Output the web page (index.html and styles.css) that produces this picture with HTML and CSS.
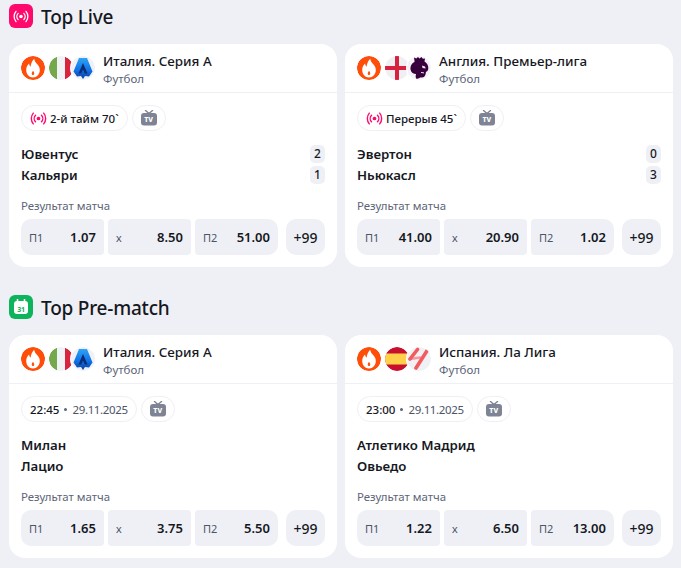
FILE: index.html
```html
<!DOCTYPE html>
<html lang="ru">
<head>
<meta charset="utf-8">
<title>Top</title>
<link rel="stylesheet" href="styles.css">
</head>
<body>
<svg class="defs" width="0" height="0" aria-hidden="true">
  <defs>
    <linearGradient id="g-sa" x1="0" y1="0" x2="0" y2="1">
      <stop offset="0" stop-color="#2fa4f5"/>
      <stop offset=".6" stop-color="#0f6fe6"/>
      <stop offset="1" stop-color="#0b3f9e"/>
    </linearGradient>
    <symbol id="fire" viewBox="0 0 24 24">
      <circle cx="12" cy="12" r="12" fill="#ff4d0a"/>
      <path d="M13.200 2.800c.4 2.800 1.800 4 3.300 5.700 1.500 1.700 2.300 3.500 2.300 5.400 0 4.200-3 7.500-6.800 7.500s-6.800-3.300-6.800-7.500c0-2.500 1.200-4.700 2.900-6.300.2 1.500.7 2.500 1.500 3.200C9.800 8.100 11 5 13.200 2.800zM12 14.800c-.8 1-1.300 1.900-1.300 2.700 0 .8.500 1.500 1.300 1.500s1.300-.7 1.300-1.500c0-.8-.5-1.700-1.300-2.700z" fill="#fff" fill-rule="evenodd"/>
    </symbol>
    <symbol id="it" viewBox="0 0 24 24">
      <clipPath id="c-it"><circle cx="12" cy="12" r="12"/></clipPath>
      <g clip-path="url(#c-it)">
        <rect width="8" height="24" fill="#74a84a"/>
        <rect x="8" width="8" height="24" fill="#f1f2f5"/>
        <rect x="16" width="8" height="24" fill="#d8243c"/>
      </g>
    </symbol>
    <symbol id="en" viewBox="0 0 24 24">
      <circle cx="12" cy="12" r="12" fill="#f0f0f4"/>
      <path d="M10 0h4v10h10v4H14v10h-4V14H0v-4h10z" fill="#d8213f"/>
    </symbol>
    <symbol id="es" viewBox="0 0 24 24">
      <clipPath id="c-es"><circle cx="12" cy="12" r="12"/></clipPath>
      <g clip-path="url(#c-es)">
        <rect width="24" height="24" fill="#c8102e"/>
        <rect y="6.500" width="24" height="11" fill="#ffd04a"/>
      </g>
    </symbol>
    <symbol id="seriea" viewBox="0 0 24 24">
      <circle cx="12" cy="12" r="12" fill="#f0f1f6"/>
      <path d="M8 2h8l5.500 13.500L18 20.500l-4-.5-2 3-2-3-4 .5L2.500 15.500z" fill="url(#g-sa)"/>
      <path d="M12 7l-4.500 10.500h2.700L12 13.500l1.800 4h2.700z" fill="#0c2c74"/>
    </symbol>
    <symbol id="pl" viewBox="0 0 24 24">
      <circle cx="12" cy="12" r="12" fill="#f6f0f7"/>
      <path d="M7.500 5 7 1.500l2.300 1L11 1l1.500 1.500L14.500 1l1.300 1.800 2.200-.3-.5 3c2.400 1.300 3.800 3.700 3.800 6.500 0 2.200-.8 3.500-2.300 3.800l-.5 2.700c-.5 2-2 3-3.500 3h-2c-.5 1-2.500 1.500-4 1-.5-1.500-.5-3 0-4.500-2.500 0-5-1.500-5.500-4.500-.4-3.500 1.500-6.500 4-7.500z" fill="#37003c"/>
      <path d="M15 9.500l3 1 .7 2-3.200-.5z" fill="#efe3f0"/>
      <path d="M14 16.500l3 .4" stroke="#efe3f0" stroke-width="1" fill="none"/>
    </symbol>
    <symbol id="laliga" viewBox="0 0 24 24">
      <circle cx="12" cy="12" r="12" fill="#f0f1f5"/>
      <path d="M3 12l10-1.500" fill="none" stroke="#f8989a" stroke-width="2.500" stroke-linecap="round"/>
      <path d="M10.500 2.500 3 12M20.500 3 9 21" fill="none" stroke="#f35a60" stroke-width="3.600" stroke-linecap="round"/>
    </symbol>
    <symbol id="live" viewBox="0 0 18 14">
      <circle cx="9" cy="7" r="2" fill="currentColor"/>
      <path d="M5.800 3.500a5 5 0 0 0 0 7M12.200 3.500a5 5 0 0 1 0 7M3.400 1.200a9 9 0 0 0 0 11.600M14.600 1.200a9 9 0 0 1 0 11.600" fill="none" stroke="currentColor" stroke-width="1.500" stroke-linecap="round"/>
    </symbol>
    <symbol id="tv" viewBox="0 0 16 16">
      <path d="M4.500 .5L8 3.500 11.500 .5" fill="none" stroke="#7e8494" stroke-width="1.400" stroke-linecap="round"/>
      <rect y="3" width="16" height="12.500" rx="3" fill="#7e8494"/>
    </symbol>
  </defs>
</svg>

<section class="block">
  <h2 class="heading">
    <span class="badge badge-live"><svg class="badge-svg"><use href="#live"/></svg></span>
    <span class="title">Top Live</span>
  </h2>
  <div class="cards">
    <article class="card">
      <header class="head">
        <svg class="ic"><use href="#fire"/></svg>
        <svg class="ic flag"><use href="#it"/></svg>
        <svg class="ic league"><use href="#seriea"/></svg>
        <div class="names"><div class="league-name">Италия. Серия А</div><div class="sport">Футбол</div></div>
      </header>
      <div class="body">
        <div class="chips">
          <span class="chip"><svg class="live-ic"><use href="#live"/></svg>2-й тайм 70`</span>
          <span class="chip chip-tv"><span class="tv"><svg class="tv-svg"><use href="#tv"/></svg><span class="tv-t">TV</span></span></span>
        </div>
        <div class="teams">
          <div class="team"><span>Ювентус</span><span class="score">2</span></div>
          <div class="team"><span>Кальяри</span><span class="score">1</span></div>
        </div>
        <div class="market">Результат матча</div>
        <div class="odds">
          <div class="odd"><span class="lbl">П1</span><b>1.07</b></div>
          <div class="odd"><span class="lbl">х</span><b>8.50</b></div>
          <div class="odd"><span class="lbl">П2</span><b>51.00</b></div>
          <div class="more">+99</div>
        </div>
      </div>
    </article>
    <article class="card">
      <header class="head">
        <svg class="ic"><use href="#fire"/></svg>
        <svg class="ic flag"><use href="#en"/></svg>
        <svg class="ic league"><use href="#pl"/></svg>
        <div class="names"><div class="league-name">Англия. Премьер-лига</div><div class="sport">Футбол</div></div>
      </header>
      <div class="body">
        <div class="chips">
          <span class="chip"><svg class="live-ic"><use href="#live"/></svg>Перерыв 45`</span>
          <span class="chip chip-tv"><span class="tv"><svg class="tv-svg"><use href="#tv"/></svg><span class="tv-t">TV</span></span></span>
        </div>
        <div class="teams">
          <div class="team"><span>Эвертон</span><span class="score">0</span></div>
          <div class="team"><span>Ньюкасл</span><span class="score">3</span></div>
        </div>
        <div class="market">Результат матча</div>
        <div class="odds">
          <div class="odd"><span class="lbl">П1</span><b>41.00</b></div>
          <div class="odd"><span class="lbl">х</span><b>20.90</b></div>
          <div class="odd"><span class="lbl">П2</span><b>1.02</b></div>
          <div class="more">+99</div>
        </div>
      </div>
    </article>
  </div>
</section>

<section class="block">
  <h2 class="heading">
    <span class="badge badge-pre">
      <svg class="cal" viewBox="0 0 16 16"><rect x="1" y="2" width="14" height="13" rx="3" fill="#fff"/><path d="M4.500 .5v3M11.500 .5v3" stroke="#fff" stroke-width="1.600" stroke-linecap="round"/><text x="8" y="12.500" text-anchor="middle" class="cal-t">31</text></svg>
    </span>
    <span class="title">Top Pre-match</span>
  </h2>
  <div class="cards">
    <article class="card">
      <header class="head">
        <svg class="ic"><use href="#fire"/></svg>
        <svg class="ic flag"><use href="#it"/></svg>
        <svg class="ic league"><use href="#seriea"/></svg>
        <div class="names"><div class="league-name">Италия. Серия А</div><div class="sport">Футбол</div></div>
      </header>
      <div class="body">
        <div class="chips">
          <span class="chip">22:45<i class="dot"></i><span class="date">29.11.2025</span></span>
          <span class="chip chip-tv"><span class="tv"><svg class="tv-svg"><use href="#tv"/></svg><span class="tv-t">TV</span></span></span>
        </div>
        <div class="teams">
          <div class="team"><span>Милан</span></div>
          <div class="team"><span>Лацио</span></div>
        </div>
        <div class="market">Результат матча</div>
        <div class="odds">
          <div class="odd"><span class="lbl">П1</span><b>1.65</b></div>
          <div class="odd"><span class="lbl">х</span><b>3.75</b></div>
          <div class="odd"><span class="lbl">П2</span><b>5.50</b></div>
          <div class="more">+99</div>
        </div>
      </div>
    </article>
    <article class="card">
      <header class="head">
        <svg class="ic"><use href="#fire"/></svg>
        <svg class="ic flag"><use href="#es"/></svg>
        <svg class="ic league"><use href="#laliga"/></svg>
        <div class="names"><div class="league-name">Испания. Ла Лига</div><div class="sport">Футбол</div></div>
      </header>
      <div class="body">
        <div class="chips">
          <span class="chip">23:00<i class="dot"></i><span class="date">29.11.2025</span></span>
          <span class="chip chip-tv"><span class="tv"><svg class="tv-svg"><use href="#tv"/></svg><span class="tv-t">TV</span></span></span>
        </div>
        <div class="teams">
          <div class="team"><span>Атлетико Мадрид</span></div>
          <div class="team"><span>Овьедо</span></div>
        </div>
        <div class="market">Результат матча</div>
        <div class="odds">
          <div class="odd"><span class="lbl">П1</span><b>1.22</b></div>
          <div class="odd"><span class="lbl">х</span><b>6.50</b></div>
          <div class="odd"><span class="lbl">П2</span><b>13.00</b></div>
          <div class="more">+99</div>
        </div>
      </div>
    </article>
  </div>
</section>
</body>
</html>
```

FILE: styles.css
```css
* { box-sizing: border-box; }

html, body { height: 100%; }

body {
  margin: 0;
  padding: 4px 8px 0 9px;
  background: #eff0f5;
  color: #16181f;
  font-family: "Noto Sans", "Open Sans", sans-serif;
  overflow: hidden;
}

.defs { position: absolute; }

.block { margin-bottom: 28px; }

.heading {
  display: flex;
  align-items: center;
  gap: 8px;
  height: 24px;
  margin: 0 0 16px;
  font-size: 19px;
  font-weight: 500;
  line-height: 24px;
  letter-spacing: -.22px;
}

.title { margin-top: 2px; }

.badge {
  display: flex;
  align-items: center;
  justify-content: center;
  width: 24px;
  height: 24px;
  border-radius: 6px;
}

.badge-live { background: #ff0a6c; color: #fff; }
.badge-pre { background: #0db45c; }

.badge-svg { width: 16px; height: 13px; }

.cal { width: 16px; height: 16px; }

.cal-t {
  font-size: 7px;
  font-weight: 700;
  fill: #0db45c;
  font-family: "Noto Sans", sans-serif;
}

.cards {
  display: grid;
  grid-template-columns: 328px 328px;
  gap: 8px;
}

.card {
  height: 223px;
  background: #fff;
  border-radius: 16px;
}

.head {
  display: flex;
  align-items: center;
  height: 49px;
  padding: 0 12px;
  border-bottom: 1px solid #eff0f5;
}

.ic { width: 24px; height: 24px; flex: none; border-radius: 50%; }
.flag { margin-left: 4px; }

.league {
  width: 26px;
  height: 26px;
  padding: 1px;
  margin-left: -3px;
  background: #fff;
}

.names { margin-left: 7px; margin-top: 2px; }

.league-name {
  font-size: 13.400px;
  font-weight: 500;
  line-height: 18px;
}

.sport {
  font-size: 11.500px;
  line-height: 16px;
  margin-top: 1px;
  color: #5c6478;
}

.body { padding: 12px 12px 0; }

.chips { display: flex; gap: 4px; }

.chip {
  display: flex;
  align-items: center;
  height: 26px;
  padding: 0 8px;
  border: 1px solid #eff0f5;
  border-radius: 13px;
  font-size: 11.500px;
  font-weight: 500;
  white-space: nowrap;
}

.chip-tv { width: 34px; padding: 0; justify-content: center; }

.live-ic { width: 17px; height: 13px; margin-right: 3px; color: #ff0a6c; }

.dot {
  width: 3px;
  height: 3px;
  margin: 0 5px;
  border-radius: 50%;
  background: #5c6478;
}

.date { color: #4c5468; font-weight: 400; letter-spacing: -.35px; }

.tv { position: relative; display: block; width: 16px; height: 16px; }
.tv-svg { display: block; width: 16px; height: 16px; }

.tv-t {
  position: absolute;
  left: 0;
  right: 0;
  top: 5px;
  color: #fff;
  font-size: 7px;
  font-weight: 800;
  line-height: 9px;
  text-align: center;
}

.teams {
  display: flex;
  flex-direction: column;
  gap: 3px;
  margin-top: 14px;
}

.team {
  display: flex;
  align-items: center;
  justify-content: space-between;
  height: 18px;
  font-size: 13.250px;
  font-weight: 600;
}

.score {
  min-width: 15px;
  height: 18px;
  padding: 0 2px;
  border-radius: 5px;
  background: #eff0f5;
  font-size: 12px;
  font-weight: 500;
  line-height: 18px;
  text-align: center;
}

.market {
  margin-top: 14px;
  font-size: 11.400px;
  line-height: 16px;
  color: #5c6478;
}

.odds { display: flex; gap: 4px; margin-top: 5px; }

.odd, .more {
  display: flex;
  align-items: center;
  height: 36px;
  background: #eff0f5;
  font-size: 13px;
}

.odd {
  justify-content: space-between;
  width: 83px;
  padding: 0 8px;
  border-radius: 4px;
}

.odd:first-child { border-radius: 10px 4px 4px 10px; }
.odd:nth-child(3) { border-radius: 4px 10px 10px 4px; }

.odd b { font-weight: 600; }

.lbl { font-size: 11px; color: #4c5468; }

.more {
  justify-content: center;
  width: 39px;
  margin-left: 4px;
  border-radius: 10px;
  font-size: 14px;
  font-weight: 500;
}
```
